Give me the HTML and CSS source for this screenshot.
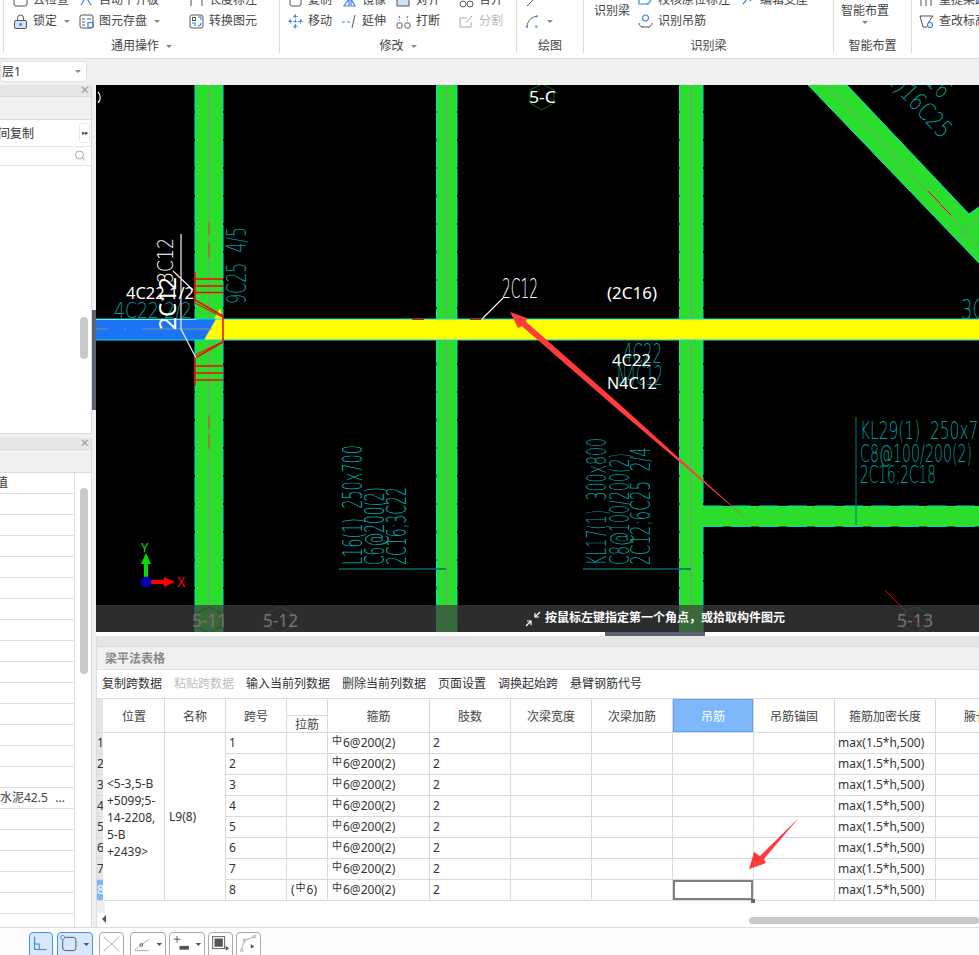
FILE: index.html
```html
<!DOCTYPE html>
<html lang="zh">
<head>
<meta charset="utf-8">
<title>梁平法表格</title>
<link rel="stylesheet" href="styles.css">
</head>
<body>
<div class="app">
  <header class="ribbon">
    <section class="group g1">
      <div class="tools tools-1">
        <div class="tool"><svg class="ico" viewBox="0 0 15 15"><rect x="1" y="2" width="13" height="11" rx="2" class="ln"/></svg>去检查</div>
        <div class="tool"><svg class="ico" viewBox="0 0 15 15"><path d="M2 12l5-8 5 8" class="lb"/></svg>自动平齐板</div>
        <div class="tool"><svg class="ico" viewBox="0 0 15 15"><path d="M2 1v12M13 1v12" class="ln"/></svg>长度标注</div>
        <div class="tool"><svg class="ico" viewBox="0 0 15 15"><rect x="1.5" y="6.5" width="12" height="8" rx="1.5" class="lb-fill"/><path d="M4.5 6.5V4a3 3 0 0 1 6 0v2.5" class="ln"/><circle cx="7.5" cy="10.5" r="1.4" class="fb"/></svg>锁定<i class="caret caret-tool"></i></div>
        <div class="tool"><svg class="ico" viewBox="0 0 15 15"><rect x="1" y="1" width="13" height="13" rx="2" class="ln"/><path d="M3 5h3M8 5h4M3 8h3M3 11h3" class="ln"/><rect x="9" y="8.5" width="5" height="5" class="lb"/></svg>图元存盘<i class="caret caret-tool"></i></div>
        <div class="tool"><svg class="ico" viewBox="0 0 15 15"><rect x="1" y="1" width="13" height="13" rx="2" class="ln"/><rect x="3.5" y="3.5" width="3" height="3" class="ln"/><path d="M9 3h3v3M3 9h3v3" class="lb"/><path d="M9 12c2 0 3-1 3-3" class="lb"/></svg>转换图元</div>
      </div>
      <div class="group-label">通用操作<i class="caret caret-label"></i></div>
    </section>
    <section class="group g2">
      <div class="tools tools-2">
        <div class="tool"><svg class="ico" viewBox="0 0 15 15"><rect x="2" y="1" width="11" height="12" rx="2" class="ln"/></svg>复制</div>
        <div class="tool"><svg class="ico" viewBox="0 0 15 15"><path d="M2 13h5V6zM13 13H9V6z" class="lb"/></svg>镜像</div>
        <div class="tool"><svg class="ico" viewBox="0 0 15 15"><rect x="1" y="3" width="12" height="10" class="lb-fill"/></svg>对齐</div>
        <div class="tool"><svg class="ico" viewBox="0 0 15 15"><circle cx="4" cy="11" r="3" class="ln"/><circle cx="11" cy="11" r="3" class="ln"/></svg>合并</div>
        <div class="tool"><svg class="ico" viewBox="0 0 15 15"><path d="M7.5 1v13M1 7.5h13M5.5 3l2-2 2 2M5.5 12l2 2 2-2M3 5.5l-2 2 2 2M12 5.5l2 2-2 2" class="lb" stroke-dasharray="3 1.5"/></svg>移动</div>
        <div class="tool"><svg class="ico" viewBox="0 0 15 15"><path d="M0 8h3M5 8h3" class="lb"/><path d="M10 14l3-13" class="ln"/></svg>延伸</div>
        <div class="tool"><svg class="ico" viewBox="0 0 15 15"><rect x="1" y="9" width="5" height="5" rx="1.5" class="ln"/><rect x="9" y="9" width="5" height="5" rx="1.5" class="ln"/><path d="M3 2l1 2M3 6h1M12 2l-1 2M12 6h-1" class="lb"/></svg>打断</div>
        <div class="tool tool-off"><svg class="ico" viewBox="0 0 15 15"><path d="M12 8v5H1V4h7M7 9l6-7" class="lg"/></svg>分割</div>
      </div>
      <div class="group-label">修改<i class="caret caret-label"></i></div>
    </section>
    <section class="group g3">
      <div class="tools tools-3">
        <div class="tool"><svg class="ico" viewBox="0 0 15 15"><path d="M2 13l9-9" class="ln"/></svg></div>
        <div class="tool"><svg class="ico" viewBox="0 0 16 15"><path d="M2 13C3 6 7 3 12 2" class="ln"/><circle cx="12.5" cy="2" r="1.2" class="fb"/><circle cx="2" cy="13" r="1.2" class="fb"/><circle cx="12" cy="13" r="1.2" class="fb"/></svg><i class="caret caret-tool"></i></div>
      </div>
      <div class="group-label">绘图</div>
    </section>
    <section class="group g4">
      <div class="tools tools-4">
        <div class="tool tool-big">识别梁</div>
        <div class="tool"><svg class="ico" viewBox="0 0 15 15"><path d="M1 1v10h9M13 7l-3 4-1-1" class="lb"/></svg>校核原位标注</div>
        <div class="tool"><svg class="ico" viewBox="0 0 15 15"><path d="M3 11l5-6 3 3" class="lb"/></svg>编辑支座</div>
        <div class="tool"><svg class="ico" viewBox="0 0 15 15"><circle cx="7.5" cy="4" r="3" class="lb"/><path d="M1 9c0 3 2 4 6.500 4s6.500-1 6.500-4M4 13v1M11 13v1" class="ln"/></svg>识别吊筋</div>
      </div>
      <div class="group-label">识别梁</div>
    </section>
    <section class="group g5">
      <div class="tools tools-5">
        <div class="smart"><span>智能布置</span><i class="caret"></i></div>
      </div>
      <div class="group-label">智能布置</div>
    </section>
    <section class="group g6">
      <div class="tools tools-6">
        <div class="tool"><svg class="ico" viewBox="0 0 15 15"><path d="M2 1v12M7 1v12M12 1v12" class="ln"/></svg>重提梁跨</div>
        <div class="tool"><svg class="ico" viewBox="0 0 15 15"><path d="M1 2h13L9 9M1 2l3 11h4" class="ln"/><circle cx="11" cy="11" r="2.500" class="lb"/></svg>查改标高</div>
      </div>
    </section>
  </header>

  <div class="layer-bar">
    <div class="combo"><span class="combo-text">分层1</span><i class="caret"></i></div>
  </div>

  <div class="main">
    <aside class="side">
      <section class="panel panel-top">
        <div class="panel-title"><span class="close">×</span></div>
        <div class="panel-tools"></div>
        <div class="copy-row"><span class="copy-text">层间复制</span><span class="more">▸▸</span></div>
        <div class="search-row"><svg class="search" viewBox="0 0 12 12"><circle cx="5.500" cy="5" r="4" class="lg"/><path d="M8.500 8l2.500 2.500" class="lg"/></svg></div>
        <div class="list-top"><div class="thumb thumb-top"></div></div>
      </section>
      <section class="panel panel-bottom">
        <div class="panel-title"><span class="close">×</span></div>
        <div class="panel-tools"></div>
        <div class="prop">
          <div class="prop-list">
            <div class="prop-row prop-head">属性值</div>
            <div class="prop-row"></div><div class="prop-row"></div><div class="prop-row"></div><div class="prop-row"></div>
            <div class="prop-row"></div><div class="prop-row"></div><div class="prop-row"></div><div class="prop-row"></div>
            <div class="prop-row"></div><div class="prop-row"></div><div class="prop-row"></div><div class="prop-row"></div>
            <div class="prop-row"></div><div class="prop-row"></div>
            <div class="prop-row prop-val"><span>水泥42.5</span><span>...</span></div>
            <div class="prop-row"></div><div class="prop-row"></div><div class="prop-row"></div><div class="prop-row"></div>
            <div class="prop-row"></div>
          </div>
          <div class="prop-scroll"><div class="thumb thumb-bottom"></div></div>
        </div>
      </section>
    </aside>
    <div class="splitter"><div class="splitter-grip"></div></div>

    <div class="work">
      <div class="canvas">
        <svg class="cad" viewBox="96 85 883 547" width="883" height="547">
          <rect x="96" y="85" width="883" height="547" class="bk"/>
          <!-- columns -->
          <rect x="195" y="85" width="28" height="547" class="gr"/>
          <rect x="436.500" y="85" width="20.500" height="547" class="gr"/>
          <rect x="679.500" y="85" width="23.500" height="547" class="gr"/>
          <polygon points="808,85 847,85 969,214 979,207 979,263" class="gr"/>
          <rect x="703" y="506" width="276" height="20.500" class="gr"/>
          <path d="M209 85V632M446.500 85V632M691 85V632M827 85L979 246M957 240L979 218" class="gy"/>
          <path d="M195 85V632M223 85V632M436.500 85V632M457 85V632M679.500 85V632M703 85V506M703 526V632" class="cy"/>
          <path d="M808 85L979 263M847 85L969 214L979 207" class="cy-solid"/>
          <path d="M703 506H979M703 526.500H979" class="cy-dash"/>
          <path d="M209 222v13M209 243v15M209 415v14M209 434v15" class="br"/>
          <path d="M928 191l12 12M940 204l11 11" class="rd1"/>
          <!-- beams -->
          <rect x="96" y="319" width="130" height="21" class="bl"/>
          <polygon points="216,319 979,319 979,340 204,340" class="ye"/>
          <polygon points="214,319 220,308 223,319" class="ye"/>
          <path d="M96 319H979M96 340H979" class="cy-solid"/>
          <path d="M96 329H108M124 329h2M142 329H212" class="gy"/>
          <path d="M412 319.500H424M470 319.500H481" class="rd1"/>
          <!-- red stirrup -->
          <path d="M195 272V300L223 316V342L195 358V386M195 279H223M195 286H223M195 292.500H223M195 366H223M195 373H223M195 380H223" class="rd2"/>
          <path d="M195 303L222 317M195 355L222 342" class="rd1"/>
          <!-- teal annotations -->
          <text class="t" font-size="26" textLength="77" lengthAdjust="spacingAndGlyphs" transform="translate(246 304) rotate(-90)">9C25&#160;&#160;4/5</text>
          <text class="t" font-size="22" textLength="78" lengthAdjust="spacingAndGlyphs" x="114" y="318">4C22 2/2</text>
          <rect x="96" y="319" width="100" height="1" class="cy-fill"/>
          <text class="t t2" font-size="26" textLength="120" lengthAdjust="spacingAndGlyphs" transform="translate(362 565) rotate(-90)">L16(1)&#160;&#160;250x700</text>
          <text class="t t2" font-size="26" textLength="78" lengthAdjust="spacingAndGlyphs" transform="translate(384 565) rotate(-90)">C6@200(2)</text>
          <text class="t t2" font-size="26" textLength="78" lengthAdjust="spacingAndGlyphs" transform="translate(406 565) rotate(-90)">2C16;3C22</text>
          <path d="M339 569H446M583 569H691" class="tl"/>
          <text class="t" font-size="26" textLength="127" lengthAdjust="spacingAndGlyphs" transform="translate(606 565) rotate(-90)">KL17(1)&#160;&#160;300x800</text>
          <text class="t" font-size="26" textLength="112" lengthAdjust="spacingAndGlyphs" transform="translate(629 565) rotate(-90)">C8@100/200(2)</text>
          <text class="t" font-size="26" textLength="118" lengthAdjust="spacingAndGlyphs" transform="translate(650 565) rotate(-90)">2C12;6C25&#160;&#160;2/4</text>
          <text class="t" font-size="25" textLength="138" lengthAdjust="spacingAndGlyphs" x="860" y="439">KL29(1)&#160;&#160;250x700</text>
          <text class="t" font-size="25" textLength="112" lengthAdjust="spacingAndGlyphs" x="860" y="462">C8@100/200(2)</text>
          <text class="t" font-size="25" textLength="76" lengthAdjust="spacingAndGlyphs" x="860" y="483">2C16;2C18</text>
          <path d="M856 417V525" class="tl2"/>
          <text class="t" font-size="25" textLength="90" lengthAdjust="spacingAndGlyphs" transform="translate(880 74) rotate(47)">(2)16C25</text>
          <text class="t" font-size="25" textLength="60" lengthAdjust="spacingAndGlyphs" transform="translate(900 56) rotate(47)">2/2 16</text>
          <text class="t" font-size="26" textLength="24" lengthAdjust="spacingAndGlyphs" x="961" y="319">3C</text>
          <text class="t" font-size="26" textLength="39" lengthAdjust="spacingAndGlyphs" x="623" y="363">4C22</text>
          <text class="t" font-size="26" textLength="46" lengthAdjust="spacingAndGlyphs" x="617" y="385">N4C12</text>
          <!-- white annotations -->
          <path d="M181 234V329L196 358M173 271L193 290M503 298L482 319" class="wh"/>
          <text class="w-thin" font-size="22" textLength="45" lengthAdjust="spacingAndGlyphs" transform="translate(173 283) rotate(-90)">3C12</text>
          <text class="w" font-size="24" textLength="53" lengthAdjust="spacingAndGlyphs" transform="translate(176 330) rotate(-90)">2C12</text>
          <text class="w" font-size="17" textLength="68" lengthAdjust="spacingAndGlyphs" x="126" y="299">4C22 1/2</text>
          <text class="w-thin" font-size="26" textLength="36" lengthAdjust="spacingAndGlyphs" x="502" y="298">2C12</text>
          <text class="w" font-size="17" textLength="50" lengthAdjust="spacingAndGlyphs" x="607" y="299">(2C16)</text>
          <text class="w" font-size="17" textLength="39" lengthAdjust="spacingAndGlyphs" x="612" y="366">4C22</text>
          <text class="w" font-size="17" textLength="50" lengthAdjust="spacingAndGlyphs" x="607" y="389">N4C12</text>
          <!-- axis tags -->
          <polygon points="542,84 554,90 554,103 542,110 530,103 530,90" class="hex"/>
          <text class="w" font-size="17" textLength="27" lengthAdjust="spacingAndGlyphs" x="529" y="103">5-C</text>
          <polygon points="209,607 221,613 221,627 209,633 197,627 197,613" class="hex"/>
          <text class="w" font-size="18" textLength="35" lengthAdjust="spacingAndGlyphs" x="192" y="627">5-11</text>
          <polygon points="280,607 292,613 292,627 280,633 268,627 268,613" class="hex"/>
          <text class="w" font-size="18" textLength="35" lengthAdjust="spacingAndGlyphs" x="263" y="627">5-12</text>
          <polygon points="915,607 927,613 927,627 915,633 903,627 903,613" class="hex"/>
          <text class="w" font-size="18" textLength="36" lengthAdjust="spacingAndGlyphs" x="897" y="627">5-13</text>
          <path d="M885 590L926 632" class="rd1"/>
          <path d="M98 92a8 8 0 0 1 0 11" class="wh"/>
          <!-- axes gizmo -->
          <path d="M146 582V562" class="ax-g"/>
          <polygon points="146,553 151,564 141,564" class="ax-gf"/>
          <path d="M146 582H166" class="ax-r"/>
          <polygon points="175,582 164,577 164,587" class="ax-rf"/>
          <circle cx="146" cy="582" r="5.500" class="ax-b"/>
          <text class="ax-ty" x="141" y="552" font-size="13">Y</text>
          <text class="ax-tx" x="177" y="587" font-size="14">X</text>
          <!-- note arrow -->
          <polygon points="510,312 527,318 526,321.700 621.600,406 690.700,468.700 750,522 689.300,470.300 618.400,410 522,326.300 518,328" class="note"/>
        </svg>
        <div class="hint">
          <svg class="hint-ico" viewBox="0 0 16 16"><path d="M1 15l5-5M2 10h4v4M15 1l-5 5M14 6h-4V2" class="lw"/></svg>
          <span>按鼠标左键指定第一个角点，或拾取构件图元</span>
        </div>
      </div>
      <div class="dock-gap"><div class="dock-grip"></div></div>
      <section class="table-panel">
        <div class="tp-top"></div>
        <div class="tp-title">梁平法表格</div>
        <div class="tp-actions">
          <span>复制跨数据</span><span class="off">粘贴跨数据</span><span>输入当前列数据</span><span>删除当前列数据</span><span>页面设置</span><span>调换起始跨</span><span>悬臂钢筋代号</span>
        </div>
        <div class="grid-wrap">
          <table class="grid">
            <colgroup>
              <col class="c-h"><col class="c-61"><col class="c-61"><col class="c-61"><col class="c-41"><col class="c-102"><col class="c-81"><col class="c-81"><col class="c-81"><col class="c-81"><col class="c-81"><col class="c-101"><col class="c-81">
            </colgroup>
            <thead>
              <tr class="hr1">
                <th rowspan="2" class="rh"></th><th rowspan="2">位置</th><th rowspan="2">名称</th><th rowspan="2">跨号</th><th></th><th rowspan="2">箍筋</th><th rowspan="2">肢数</th><th rowspan="2">次梁宽度</th><th rowspan="2">次梁加筋</th><th rowspan="2" class="hot">吊筋</th><th rowspan="2">吊筋锚固</th><th rowspan="2">箍筋加密长度</th><th rowspan="2">腋长</th>
              </tr>
              <tr class="hr2"><th>拉筋</th></tr>
            </thead>
            <tbody>
              <tr><td class="rh">1</td><td rowspan="8" class="pos">&lt;5-3,5-B<br>+5099;5-<br>14-2208,<br>5-B<br>+2439&gt;</td><td rowspan="8" class="name">L9(8)</td><td>1</td><td></td><td><span class="bar">中</span>6@200(2)</td><td>2</td><td></td><td></td><td></td><td></td><td>max(1.5*h,500)</td><td></td></tr>
              <tr><td class="rh">2</td><td>2</td><td></td><td><span class="bar">中</span>6@200(2)</td><td>2</td><td></td><td></td><td></td><td></td><td>max(1.5*h,500)</td><td></td></tr>
              <tr><td class="rh">3</td><td>3</td><td></td><td><span class="bar">中</span>6@200(2)</td><td>2</td><td></td><td></td><td></td><td></td><td>max(1.5*h,500)</td><td></td></tr>
              <tr><td class="rh">4</td><td>4</td><td></td><td><span class="bar">中</span>6@200(2)</td><td>2</td><td></td><td></td><td></td><td></td><td>max(1.5*h,500)</td><td></td></tr>
              <tr><td class="rh">5</td><td>5</td><td></td><td><span class="bar">中</span>6@200(2)</td><td>2</td><td></td><td></td><td></td><td></td><td>max(1.5*h,500)</td><td></td></tr>
              <tr><td class="rh">6</td><td>6</td><td></td><td><span class="bar">中</span>6@200(2)</td><td>2</td><td></td><td></td><td></td><td></td><td>max(1.5*h,500)</td><td></td></tr>
              <tr><td class="rh">7</td><td>7</td><td></td><td><span class="bar">中</span>6@200(2)</td><td>2</td><td></td><td></td><td></td><td></td><td>max(1.5*h,500)</td><td></td></tr>
              <tr><td class="rh rh-on">8</td><td>8</td><td class="paren">(<span class="bar">中</span>6)</td><td><span class="bar">中</span>6@200(2)</td><td>2</td><td></td><td></td><td class="sel"></td><td></td><td>max(1.5*h,500)</td><td></td></tr>
            </tbody>
          </table>
          <div class="grid-foot"><div class="foot-stub"></div></div>
          <div class="hscroll"><i class="arrow-left"></i><div class="hthumb"></div></div>
        </div>
        <svg class="note-arrow" viewBox="749 818 50 51" width="50" height="51"><polygon points="749,869 754,852 760,856 798.600,818 764,859 766,863" class="note"/></svg>
      </section>
    </div>
  </div>

  <footer class="statusbar">
    <div class="sbtn on b24"><svg viewBox="0 0 24 22"><path d="M5 3V17H18M5 11h5v6" class="lb"/></svg></div>
    <div class="sbtn on b36"><svg viewBox="0 0 36 22"><rect x="5" y="4" width="14" height="14" rx="3" class="ln"/><circle cx="5" cy="4" r="2" class="lb-w"/><path d="M27 10h6l-3 3z" class="fg"/></svg></div>
    <div class="sbtn b25 gap-l"><svg viewBox="0 0 25 22"><path d="M4 3l17 16M21 3L4 19" class="lg"/></svg></div>
    <div class="sbtn b36 gap-l"><svg viewBox="0 0 36 22"><path d="M4 17L19 6M4 18h15" class="lg"/><circle cx="11" cy="12" r="1.500" class="ln"/><path d="M27 10h6l-3 3z" class="fg"/></svg></div>
    <div class="sbtn b36 gap-s"><svg viewBox="0 0 36 22"><path d="M4 6h7M7.500 2.500v7" class="ln"/><rect x="10" y="13" width="10" height="4" class="fg"/><path d="M27 10h6l-3 3z" class="fg"/></svg></div>
    <div class="sbtn b25 gap-s"><svg viewBox="0 0 25 22"><rect x="4" y="3" width="13" height="13" class="ln"/><rect x="6" y="5" width="9" height="9" class="fg"/><path d="M18 13l4 3-4 2z" class="fg"/></svg></div>
    <div class="sbtn b25 gap-s"><svg viewBox="0 0 25 22"><path d="M5 17L8 7 19 3" class="lg"/><circle cx="5" cy="18" r="1.500" class="lg"/><circle cx="8" cy="7" r="1.500" class="lg"/><circle cx="19" cy="3" r="1.500" class="lg"/><path d="M15 11l4 3-4 2z" class="fg"/></svg></div>
  </footer>
</div>
</body>
</html>
```
FILE: styles.css
```css
* { box-sizing: border-box; }
html, body { margin: 0; padding: 0; }
body { width: 979px; height: 955px; overflow: hidden; background: #fff; color: #333; font: 12px/1.2 "Noto Sans", "Noto Sans CJK SC", sans-serif; }
.app { width: 979px; height: 955px; display: flex; flex-direction: column; overflow: hidden; }
i { display: block; font-style: normal; }

/* ribbon */
.ribbon { height: 59px; flex: none; display: flex; padding-left: 3px; background: #fff; border-bottom: 1px solid #dcdcdc; overflow: hidden; }
.group { height: 53px; flex: none; display: flex; flex-direction: column; border-left: 1px solid #ddd; }
.g1 { width: 276px; } .g2 { width: 237px; } .g3 { width: 67px; } .g4 { width: 250px; } .g5 { width: 78px; } .g6 { width: 68px; }
.tools { display: grid; grid-auto-rows: 21px; height: 42px; margin-top: -10px; flex: none; }
.tools-1 { grid-template-columns: 66px 110px 1fr; padding-left: 9px; }
.tools-2 { grid-template-columns: 54px 54px 63px 1fr; padding-left: 8px; }
.tools-3 { grid-template-columns: 1fr; padding-left: 8px; }
.tools-4 { grid-template-columns: 44px 102px 1fr; padding-left: 10px; }
.tools-5 { grid-template-columns: 1fr; padding-left: 7px; }
.tools-6 { grid-template-columns: 1fr; padding-left: 7px; }
.tool { display: flex; align-items: center; gap: 5px; white-space: nowrap; color: #444; }
.tool-off { color: #bbb; }
.tool-big { grid-row: span 2; }
.ico { width: 15px; height: 15px; flex: none; }
.smart { grid-row: span 2; padding-top: 14px; display: flex; flex-direction: column; width: 48px; align-items: center; white-space: nowrap; color: #444; }
.smart .caret { margin-top: 3px; }
.group-label { margin-top: 7px; height: 14px; line-height: 14px; display: flex; justify-content: center; align-items: center; color: #444; white-space: nowrap; }
.caret { width: 0; height: 0; border-style: solid; border-width: 3px 3.5px 0; border-color: #888 transparent transparent; flex: none; }
.caret-label { margin-left: 7px; }
.caret-tool { margin-left: 2px; }

/* layer bar */
.layer-bar { height: 26px; flex: none; background: #f0f0f0; padding-top: 2px; }
.combo { width: 87px; height: 21px; background: #fff; border: 1px solid #e2e2e2; border-radius: 3px; display: flex; align-items: center; justify-content: space-between; padding-right: 5px; overflow: hidden; }
.combo-text { margin: 1px 0 0 -11px; color: #333; white-space: nowrap; }

/* layout */
.main { height: 842px; flex: none; display: flex; }
.side { width: 92px; flex: none; display: flex; flex-direction: column; gap: 4px; background: #f0f0f0; }
.panel { display: flex; flex-direction: column; border-right: 1px solid #d9d9d9; background: #fff; }
.panel-top { height: 349px; border-bottom: 1px solid #d9d9d9; }
.panel-bottom { flex: 1; min-height: 0; }
.panel-title { height: 12px; flex: none; background: #e6e6e6; border-bottom: 1px solid #dcdcdc; position: relative; }
.close { position: absolute; right: 2px; top: -3px; color: #999; font-size: 15px; line-height: 15px; }
.panel-tools { height: 23px; flex: none; background: #f0f0f0; border-bottom: 1px solid #dcdcdc; }
.copy-row { height: 27px; flex: none; display: flex; align-items: center; justify-content: space-between; padding-right: 1px; border-bottom: 1px solid #e4e4e4; overflow: hidden; }
.copy-text { margin: 3px 0 0 -14px; white-space: nowrap; }
.more { width: 11px; height: 20px; border: 1px solid #e6e6e6; border-radius: 3px; font-size: 7px; line-height: 18px; color: #555; text-align: center; letter-spacing: -1px; background: #fff; }
.search-row { height: 19px; flex: none; display: flex; justify-content: flex-end; align-items: center; padding-right: 5px; border-bottom: 1px solid #e4e4e4; }
.search { width: 12px; height: 12px; }
.list-top { flex: 1; padding: 151px 0 0 80px; }
.thumb { width: 8px; background: #c9c9c9; border-radius: 4px; }
.thumb-top { height: 42px; }
.prop { flex: 1; min-height: 0; display: flex; overflow: hidden; }
.prop-list { width: 75px; flex: none; border-right: 1px solid #e0e0e0; }
.prop-row { height: 21px; padding-top: 1px; border-bottom: 1px solid #e0e0e0; display: flex; align-items: center; justify-content: space-between; white-space: nowrap; overflow: hidden; }
.prop-head { justify-content: flex-start; text-indent: -28px; }
.prop-val { padding-right: 9px; color: #444; font-size: 12px; }
.prop-scroll { flex: 1; padding: 15px 0 0 5px; }
.thumb-bottom { height: 186px; }
.splitter { width: 4px; flex: none; background: #f0f0f0; padding-top: 225px; }
.splitter-grip { height: 100px; background: #5c6470; }
.work { width: 883px; flex: none; display: flex; flex-direction: column; }

/* canvas */
.canvas { height: 547px; flex: none; position: relative; background: #000; overflow: hidden; }
.cad { display: block; }
.bk { fill: #000; }
.gr { fill: #2bde2b; }
.gy { stroke: #8c8c8c; stroke-width: 1; fill: none; }
.cy { stroke: #00e0e0; stroke-width: 1; stroke-dasharray: 26 2; fill: none; }
.cy-solid { stroke: #00e0e0; stroke-width: 1; fill: none; }
.cy-fill { fill: #8fd8e8; }
.cy-dash { stroke: #00d8d8; stroke-width: 1; stroke-dasharray: 20 8; fill: none; }
.br { stroke: #b86a20; stroke-width: 1.5; fill: none; }
.rd1 { stroke: #f00; stroke-width: 1; fill: none; }
.rd2 { stroke: #f00; stroke-width: 1.500; fill: none; }
.bl { fill: #1a74f5; }
.ye { fill: #ffff00; }
.t { fill: #009a9a; font-family: "DejaVu Sans", sans-serif; font-weight: 200; }
.t2 { fill: #00abab; }
.w { fill: #fff; font-family: "Noto Sans", sans-serif; }
.w-thin { fill: #fff; font-family: "DejaVu Sans", sans-serif; font-weight: 200; }
.tl { stroke: #006a6a; stroke-width: 1.500; fill: none; }
.tl2 { stroke: #007c7c; stroke-width: 1; fill: none; }
.wh { stroke: #f0f0f0; stroke-width: 1.200; fill: none; }
.hex { fill: none; stroke: #0a6a0a; stroke-width: 1; }
.ax-g { stroke: #00e000; stroke-width: 4; }
.ax-gf { fill: #00e000; }
.ax-r { stroke: #f00; stroke-width: 4; }
.ax-rf { fill: #f00; }
.ax-b { fill: #0000b4; }
.ax-ty { fill: #00e000; font-family: "Noto Sans", sans-serif; }
.ax-tx { fill: #f00; font-family: "Noto Sans", sans-serif; }
.note { fill: #ff3b3b; }
.hint { position: absolute; left: 0; right: 0; bottom: 0; height: 27px; background: rgba(62, 62, 62, .73); display: flex; align-items: center; gap: 4px; padding-left: 429px; color: #fff; font-weight: 700; }
.hint-ico { width: 16px; height: 16px; flex: none; }
.lw { stroke: #fff; stroke-width: 1.200; fill: none; }

/* table panel */
.dock-gap { height: 4px; flex: none; background: #fff; padding-left: 509px; }
.dock-grip { width: 100px; height: 4px; background: #5c6470; }
.table-panel { flex: 1; min-height: 0; position: relative; border-left: 1px solid #dcdcdc; background: #fff; overflow: hidden; }
.tp-top { height: 11px; background: #e6e6e6; border-bottom: 1px solid #dcdcdc; }
.tp-title { height: 23px; line-height: 24px; padding-left: 8px; background: #f0f0f0; border-bottom: 1px solid #e2e2e2; color: #888; font-weight: 700; }
.tp-actions { height: 28px; padding-top: 1px; display: flex; align-items: center; gap: 12px; padding-left: 5px; white-space: nowrap; color: #333; }
.tp-actions .off { color: #bdbdbd; }
.grid-wrap { overflow: hidden; height: 229px; border-top: 1px solid #dcdcdc; }
.grid { table-layout: fixed; width: 920px; border-collapse: separate; border-spacing: 0; }
.c-h { width: 7px; } .c-61 { width: 61px; } .c-41 { width: 41px; } .c-102 { width: 102px; } .c-81 { width: 81px; } .c-101 { width: 101px; }
.grid th, .grid td { border-right: 1px solid #dadada; border-bottom: 1px solid #dadada; padding: 0; overflow: hidden; white-space: nowrap; }
.grid th { font-weight: 400; color: #444; text-align: center; padding-top: 3px; }
.hr1 th { height: 17px; }
.grid .hr1 th:nth-child(5) { padding: 0; line-height: 1px; }
.grid .hr2 th { height: 17px; padding-top: 1px; line-height: 15px; }
.grid td { height: 21px; padding: 1px 0 0 3px; color: #333; }
.grid .rh { padding-left: 0; background: #e6e6e6; text-align: left; border-right: 1px solid #fff; }
.grid .rh-on { background: #7fb8fa; color: #fff; }
.grid .hot { background: #7fb8fa; color: #fff; box-shadow: inset 0 0 0 1px #5fa3f0; }
.grid .pos { white-space: normal; line-height: 17px; padding: 2px 0 0 3px; }
.grid .name { padding-left: 4px; }
.grid .paren { padding-left: 4px; }
.bar { font-size: 10px; position: relative; top: -3px; margin-right: 1px; margin-left: 1px; }
.grid .sel { position: relative; box-shadow: inset 0 0 0 2px #808080; overflow: visible; }
.grid .sel::after { content: ""; position: absolute; right: -2px; bottom: -3px; width: 4px; height: 4px; background: #666; }
.grid-foot { height: 12px; }
.foot-stub { width: 8px; height: 12px; background: #efefef; }
.hscroll { height: 14px; position: relative; display: flex; align-items: center; padding-left: 652px; }
.arrow-left { position: absolute; left: 5px; top: 2px; width: 0; height: 0; border-style: solid; border-width: 4px 4px 4px 0; border-color: transparent #555 transparent transparent; }
.hthumb { width: 240px; height: 7px; background: #c8c8c8; border-radius: 4px; }
.note-arrow { position: absolute; left: 652px; top: 182px; }

/* status bar */
.statusbar { height: 28px; flex: 1; display: flex; padding: 4px 0 0 29px; background: #fcfcfc; border-top: 1px solid #dcdcdc; }
.sbtn { height: 28px; border: 1px solid #aaa; border-radius: 4px 4px 0 0; background: #fff; flex: none; margin-right: 4px; }
.sbtn svg { display: block; width: 100%; height: 22px; }
.sbtn.on { background: #d7e7fc; border-color: #4a90e2; }
.b24 { width: 24px; } .b25 { width: 25px; } .b36 { width: 36px; }
.gap-l { margin-left: 2px; }
.gap-s { margin-left: -1px; }

/* icon strokes */
.ln { stroke: #555; stroke-width: 1; fill: none; }
.lb { stroke: #3a86e0; stroke-width: 1.200; fill: none; }
.lb-w { stroke: #3a86e0; stroke-width: 1; fill: #fff; }
.lb-fill { stroke: #555; stroke-width: 1; fill: #cfe3fa; }
.lg { stroke: #a8a8a8; stroke-width: 1; fill: none; }
.fb { fill: #3a86e0; }
.fg { fill: #555; }
```
